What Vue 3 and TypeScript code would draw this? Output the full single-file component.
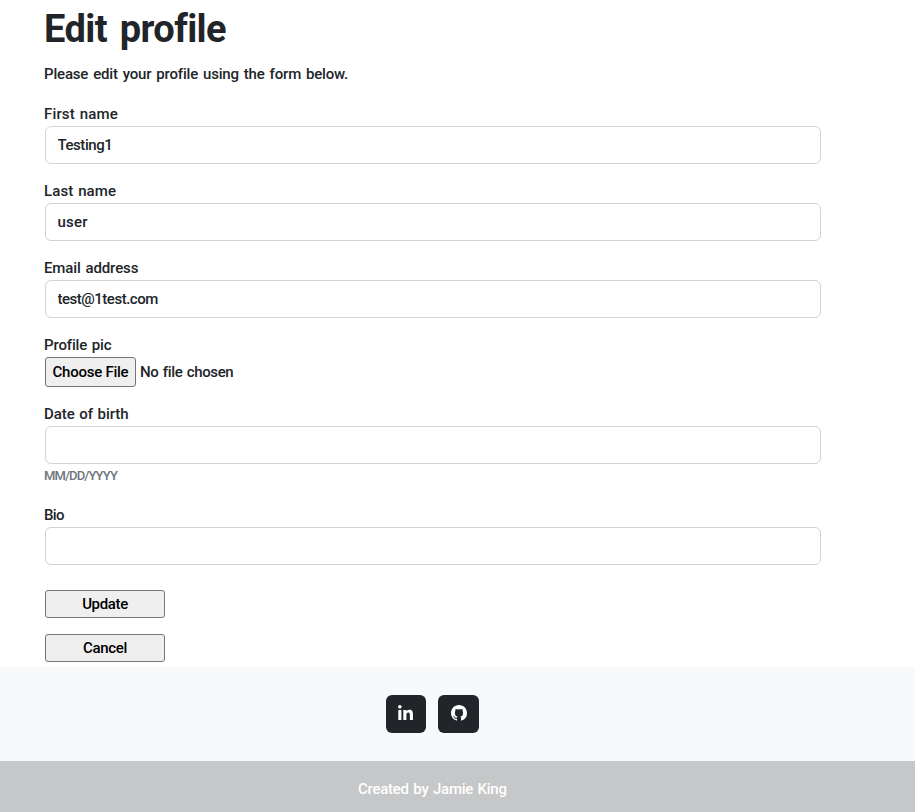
<script setup lang="ts">
import { ref } from 'vue'

interface Field {
  id: string
  label: string
  value: string
  type: 'text' | 'file'
  hint?: string
}

const fields = ref<Field[]>([
  { id: 'first', label: 'First name', value: 'Testing1', type: 'text' },
  { id: 'last', label: 'Last name', value: 'user', type: 'text' },
  { id: 'email', label: 'Email address', value: 'test@1test.com', type: 'text' },
  { id: 'picture', label: 'Profile pic', value: '', type: 'file' },
  { id: 'birth', label: 'Date of birth', value: '', type: 'text', hint: 'MM/DD/YYYY' },
  { id: 'bio', label: 'Bio', value: '', type: 'text' },
])
</script>

<template>
  <div class="page">
    <main class="content">
      <h1>Edit profile</h1>
      <p class="intro">Please edit your profile using the form below.</p>
      <form @submit.prevent>
        <div v-for="field in fields" :key="field.id" class="field" :class="field.id">
          <label :for="field.id">{{ field.label }}</label>
          <input v-if="field.type === 'file'" :id="field.id" class="file" type="file" />
          <input v-else :id="field.id" v-model="field.value" class="control" type="text" />
          <small v-if="field.hint">{{ field.hint }}</small>
        </div>
        <div class="actions">
          <button class="update" type="submit">Update</button>
          <button class="cancel" type="button">Cancel</button>
        </div>
      </form>
    </main>
    <footer>
      <nav class="social">
        <a class="linkedin" href="#" aria-label="LinkedIn">
          <svg width="15" height="17" viewBox="0 0 448 512"><path d="M100.3 448H7.4V148.900h92.900zM53.800 108.100C24.100 108.100 0 83.500 0 53.800a53.800 53.800 0 0 1 107.600 0c0 29.700-24.100 54.300-53.800 54.300zM447.900 448h-92.700V302.400c0-34.700-.7-79.200-48.300-79.200-48.300 0-55.700 37.700-55.700 76.700V448h-92.800V148.900h89.100v40.800h1.300c12.400-23.500 42.700-48.300 87.900-48.300 94 0 111.300 61.900 111.300 142.300V448z" /></svg>
        </a>
        <a class="github" href="#" aria-label="GitHub">
          <svg width="16" height="16" viewBox="0 0 16 16"><path d="M8 0C3.580 0 0 3.580 0 8c0 3.540 2.290 6.530 5.470 7.590.4.070.550-.170.550-.380v-1.490C3.780 14.210 3.310 12.780 3.310 12.780c-.360-.930-.890-1.170-.890-1.170-.730-.5.050-.490.050-.490.810.060 1.230.830 1.230.830.720 1.230 1.880.880 2.340.670.070-.520.280-.880.510-1.080-1.300-.2-2.640-.890-2.640-3.850 0-.870.310-1.590.620-1.950-.080-.2-.260-1.020.080-1.820 0 0 .570-.110 1.700.620A7.700 7.700 0 0 1 8 4.300c.680 0 1.200.090 1.700.230 1.130-.730 1.700-.620 1.700-.620.340.800.160 1.620.080 1.820.310.360.620 1.080.620 1.950 0 2.960-1.350 3.650-2.650 3.850.290.250.540.730.540 1.480v2.200c0 .210.150.460.550.380A8 8 0 0 0 16 8c0-4.420-3.580-8-8-8z" /></svg>
        </a>
      </nav>
      <div class="credit">Created by Jamie King</div>
    </footer>
  </div>
</template>

<style>
body {
  background: #fff;
}
</style>

<style scoped>
.page {
  height: 812px;
  overflow: hidden;
  display: flex;
  flex-direction: column;
  font-family: Roboto, "Liberation Sans", sans-serif;
  font-size: 15px;
  font-weight: 500;
  line-height: 24px;
  color: #212529;
}

.page * {
  box-sizing: border-box;
}

.content {
  height: 667px;
  flex: none;
  width: 776px;
  margin-left: 45px;
}

h1 {
  margin: 0 0 0 -1px;
  padding-top: 6px;
  font-size: 38px;
  font-weight: 700;
  line-height: 47px;
  letter-spacing: -0.6px;
  word-spacing: 4px;
}

.intro {
  margin: 9px 0 16px;
  letter-spacing: -0.18px;
  word-spacing: 1.4px;
}

.field {
  display: flex;
  flex-direction: column;
  align-items: flex-start;
  margin-bottom: 15px;
}

label,
small,
.intro {
  margin-left: -1px;
}

label {
  word-spacing: 1px;
}

.first label {
  letter-spacing: 0.15px;
}

.last label {
  letter-spacing: 0.1px;
}

.email label {
  letter-spacing: -0.1px;
}

.picture label {
  letter-spacing: -0.15px;
}

.birth label {
  letter-spacing: -0.07px;
}

.bio label {
  letter-spacing: -0.6px;
}

.control {
  width: 100%;
  height: 38px;
  padding: 6px 11.5px;
  border: 1px solid #ced4da;
  border-radius: 6px;
  background: #fff;
  color: inherit;
  font: inherit;
  outline: none;
}

.first .control {
  letter-spacing: -0.45px;
}

.last .control {
  letter-spacing: 0.2px;
}

.email .control {
  letter-spacing: -0.48px;
}

.file {
  height: 30px;
  font: inherit;
  color: inherit;
  letter-spacing: -0.36px;
  word-spacing: 1px;
}

.file::file-selector-button {
  box-sizing: border-box;
  width: 91px;
  height: 30px;
  padding: 0;
  border: 1px solid #767676;
  border-radius: 3px;
  background: #efefef;
  color: #000;
  font: inherit;
  letter-spacing: -0.25px;
}

small {
  font-size: 13px;
  line-height: 24px;
  letter-spacing: -0.9px;
  color: #6c757d;
}

.actions {
  display: flex;
  flex-direction: column;
  gap: 16px;
  padding-top: 10px;
}

.actions button {
  width: 120px;
  height: 28px;
  padding: 0;
  border: 1px solid #767676;
  border-radius: 3px;
  background: #efefef;
  color: #000;
  font: inherit;
  letter-spacing: -0.35px;
}

footer {
  flex: 1;
  display: flex;
  flex-direction: column;
  background: #f8f9fa;
}

.social {
  display: flex;
  gap: 12px;
  height: 94px;
  padding: 28px 0 0 386px;
}

.social a {
  display: flex;
  align-items: center;
  justify-content: center;
  width: 40px;
  height: 38px;
  padding: 0 1px 2px 0;
  border-radius: 6px;
  background: #212529;
}

.social .github {
  width: 41px;
  padding-right: 0;
}

svg {
  fill: #fff;
}

.credit {
  flex: 1;
  padding: 16px 0 0 358px;
  background: #c6c7c8;
  color: #fff;
  letter-spacing: -0.25px;
  word-spacing: 1px;
}
</style>
